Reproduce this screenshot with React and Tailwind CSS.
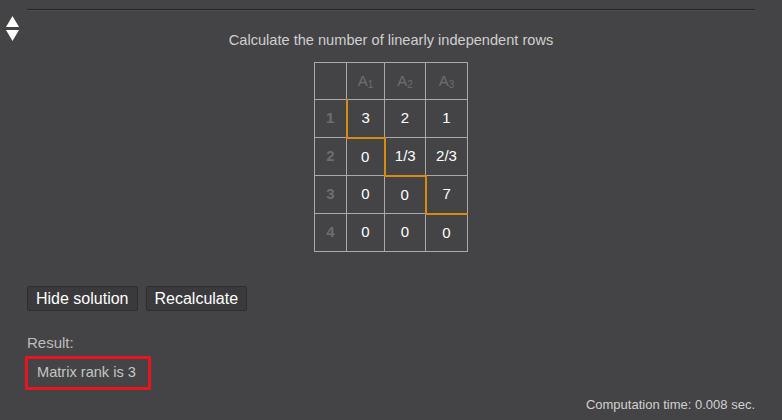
export default function App() {
  const font = { fontFamily: '"Liberation Sans", Arial, sans-serif' };
  const rows = [
    ["1", "3", "2", "1"],
    ["2", "0", "1/3", "2/3"],
    ["3", "0", "0", "7"],
    ["4", "0", "0", "0"],
  ];
  const widths = ["w-[32px]", "w-[38px]", "w-[41px]", "w-[42px]"];
  return (
    <div className="w-[782px] h-[420px] bg-[#444446] relative overflow-hidden" style={font}>
      <div className="absolute left-[6px] top-[16px] flex flex-col gap-[3px]">
        <svg width="13" height="11" viewBox="0 0 13 11">
          <polygon points="6.5,0 13,11 0,11" fill="#ffffff" />
        </svg>
        <svg width="13" height="11" viewBox="0 0 13 11">
          <polygon points="0,0 13,0 6.5,11" fill="#ffffff" />
        </svg>
      </div>
      <div className="pl-[27px] pr-[27px] pt-[9px]">
        <div className="h-[2px] border-t border-[#262626] border-b-[#4e4e50] border-b" />
        <div className="text-center text-[14.6px] text-[#cfcfcf] mt-[20px] leading-[18px]">
          Calculate the number of linearly independent rows
        </div>
        <div className="flex justify-center mt-[13px]">
          <table className="border-collapse text-[15px]">
            <thead>
              <tr className="h-[37px]">
                <th className={`border border-[#a9a9a9] ${widths[0]}`}></th>
                {["1", "2", "3"].map((n, i) => (
                  <th key={n} className={`border border-[#a9a9a9] font-normal text-[#6d6d6f] ${widths[i + 1]}`}>
                    A<sub className="text-[10px]">{n}</sub>
                  </th>
                ))}
              </tr>
            </thead>
            <tbody>
              {rows.map((r, ri) => (
                <tr key={ri} className="h-[38px]">
                  {r.map((c, ci) => {
                    const pivot = ci === ri + 1;
                    return (
                      <td
                        key={ci}
                        className={`border border-[#a9a9a9] text-center ${widths[ci]} ${
                          ci === 0 ? "text-[#6d6d6f] font-bold" : "text-white"
                        } ${pivot ? "border-l-2 border-b-2 border-l-[#d98a12] border-b-[#d98a12]" : ""}`}
                      >
                        {c}
                      </td>
                    );
                  })}
                </tr>
              ))}
            </tbody>
          </table>
        </div>
        <div className="flex gap-[8px] mt-[34px]">
          <button className="h-[25px] px-[8px] bg-[#3a3a3c] border border-[#2e2e30] rounded-[2px] text-white text-[16px] leading-[18px]">
            Hide solution
          </button>
          <button className="h-[25px] px-[8px] bg-[#3a3a3c] border border-[#2e2e30] rounded-[2px] text-white text-[16px] leading-[18px]">
            Recalculate
          </button>
        </div>
        <div className="mt-[23px] text-[15px] text-[#bdbdbd] leading-[18px]">Result:</div>
        <div className="mt-[4px] -ml-[2px] w-[126px] h-[34px] border-[3px] border-[#e8141f] flex items-center pl-[9px] text-[14.6px] text-[#c4c4c4]">
          Matrix rank is 3
        </div>
        <div className="text-right text-[13px] text-[#d0d0d0] mt-[5px]">Computation time: 0.008 sec.</div>
      </div>
    </div>
  );
}
